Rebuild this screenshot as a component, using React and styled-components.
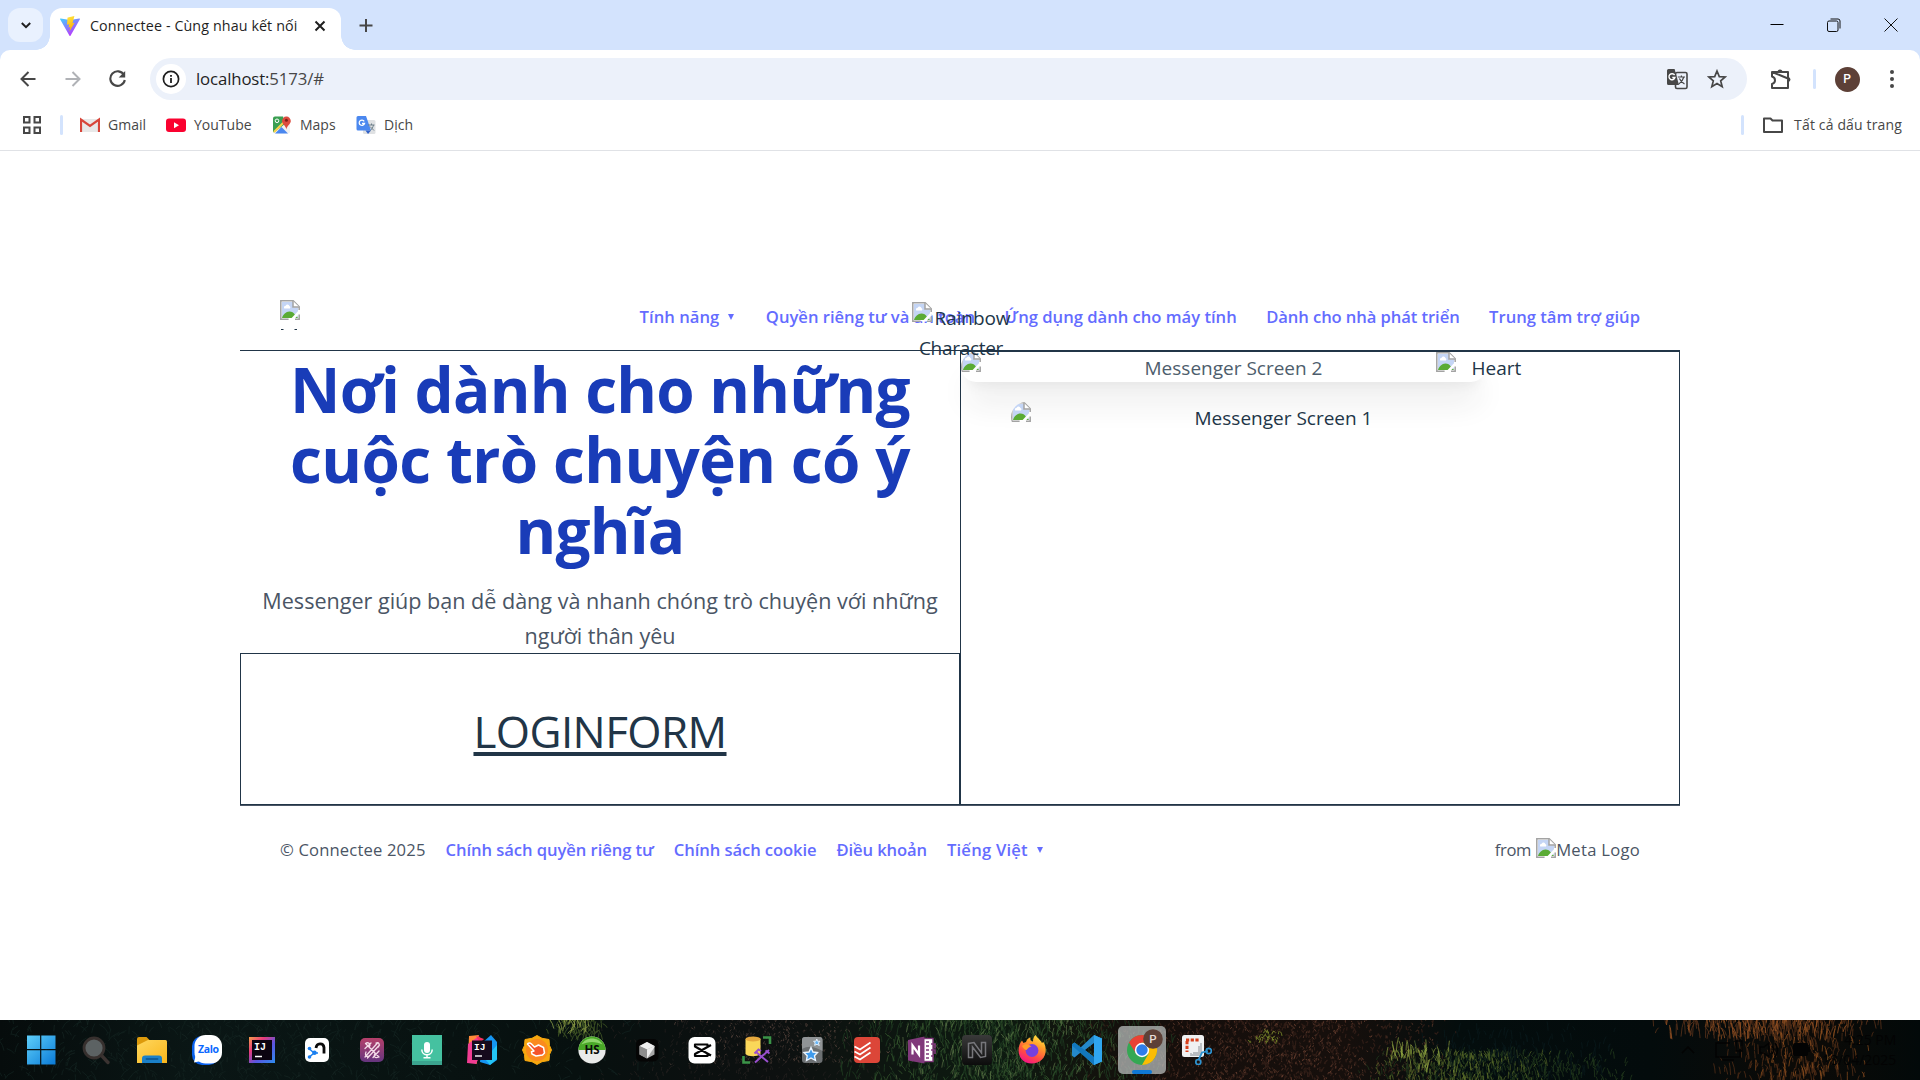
import React from "react";
import styled, { createGlobalStyle, css } from "styled-components";

const Global = createGlobalStyle`
  * { box-sizing: border-box; }
  html, body { margin: 0; padding: 0; background: #fff; }
  body { width: 1920px; height: 1080px; overflow: hidden; font-family: "Open Sans", "Noto Sans", sans-serif; }
  svg { display: block; flex: none; }
`;

const Screen = styled.div`
  width: 1920px;
  height: 1080px;
  display: flex;
  flex-direction: column;
  background: #fff;
`;

const Text = styled.span`
  font-size: ${(p) => p.$size}px;
  letter-spacing: ${(p) => p.$ls || 0}px;
  font-weight: ${(p) => p.$weight || 400};
  color: ${(p) => p.$color || "inherit"};
  line-height: ${(p) => p.$lh || 24}px;
  white-space: nowrap;
`;

/* ---------- browser chrome ---------- */

const TabStrip = styled.div`
  height: 50px;
  flex: none;
  display: flex;
  background: #d3e3fd;
  padding-left: 8px;
`;

const TabSearch = styled.div`
  width: 35px;
  height: 34px;
  margin-top: 8px;
  border-radius: 12px;
  background: #e9f1fe;
  display: flex;
  align-items: center;
  justify-content: center;
`;

const Tab = styled.div`
  position: relative;
  width: 291px;
  height: 42px;
  margin: 8px 0 0 7px;
  padding-left: 10px;
  border-radius: 12px 12px 0 0;
  background: #fff;
  display: flex;
  align-items: center;
  padding-bottom: 6px;
  &::before, &::after {
    content: "";
    position: absolute;
    bottom: 0;
    width: 14px;
    height: 14px;
  }
  &::before { left: -14px; background: radial-gradient(circle at 0 0, transparent 13.5px, #fff 14px); }
  &::after { right: -14px; background: radial-gradient(circle at 100% 0, transparent 13.5px, #fff 14px); }
`;

const TabTitle = styled.div`
  width: 224px;
  margin-left: 10px;
  display: flex;
  color: #1f1f1f;
`;

const NewTab = styled.div`
  margin: 17px 0 0 17px;
`;

const WindowButtons = styled.div`
  margin-left: auto;
  margin-right: 1px;
  display: flex;
  & > div {
    width: 57px;
    height: 50px;
    display: flex;
    align-items: center;
    justify-content: center;
  }
`;

const ToolbarWrap = styled.div`
  height: 52px;
  flex: none;
  background: #d3e3fd;
`;

const Toolbar = styled.div`
  height: 52px;
  background: #fff;
  border-radius: 10px 10px 0 0;
  display: flex;
  align-items: center;
  padding: 6px 12px 0 15px;
`;

const NavIcon = styled.div`
  width: ${(p) => p.$w || 45}px;
  display: flex;
  justify-content: ${(p) => p.$j || "center"};
`;

const Omnibox = styled.div`
  width: 1597px;
  height: 42px;
  border-radius: 21px;
  background: #ecf1fa;
  display: flex;
  align-items: center;
  padding: 0 20px 0 6px;
  color: #474747;
  b { font-weight: 400; color: #1f1f1f; }
`;

const InfoDot = styled.div`
  width: 30px;
  height: 30px;
  border-radius: 50%;
  background: #fff;
  display: flex;
  align-items: center;
  justify-content: center;
  margin-right: 10px;
`;

const OmniIcons = styled.div`
  margin-left: auto;
  display: flex;
  gap: 19px;
  align-items: center;
`;

const Divider = styled.div`
  width: 3px;
  height: 20px;
  border-radius: 2px;
  background: #d3e3fd;
`;

const Avatar = styled.div`
  width: 25px;
  height: 25px;
  border-radius: 50%;
  background: #5d4037;
  color: #fff;
  font: 500 12px/25px Roboto, sans-serif;
  text-align: center;
`;

const Bookmarks = styled.div`
  height: 49px;
  flex: none;
  display: flex;
  align-items: center;
  padding: 0 18px 3px 23px;
  border-bottom: 1px solid #e0e2e6;
  color: #474747;
`;

const Bookmark = styled.div`
  display: flex;
  align-items: center;
  gap: 8px;
  width: ${(p) => p.$w}px;
`;

const AllBookmarks = styled.div`
  display: flex;
  align-items: center;
  margin-left: auto;
`;

/* ---------- page ---------- */

const Page = styled.main`
  height: 869px;
  flex: none;
  padding: 139px 240px 0;
  color: #213547;
`;

const Header = styled.header`
  height: 61px;
  border-bottom: 1px solid #213547;
  padding: 10px 40px 0;
  display: flex;
  justify-content: space-between;
`;

const LogoClip = styled.div`
  width: 20px;
  height: 30px;
  overflow: hidden;
`;

const Nav = styled.nav`
  display: flex;
  gap: 29.5px;
  height: 34px;
  align-items: center;
`;

const Link = styled.a`
  display: flex;
  align-items: center;
  color: #646cff;
`;

const Caret = styled.i`
  width: 0;
  height: 0;
  margin-left: 9px;
  margin-right: ${(p) => p.$mr || 0}px;
  border-left: 3.5px solid transparent;
  border-right: 3.5px solid transparent;
  border-top: 6px solid #646cff;
`;

const Columns = styled.section`
  display: grid;
  grid-template-columns: 720px 720px;
  height: 454px;
`;

const Left = styled.div`
  display: flex;
  flex-direction: column;
  align-items: center;
`;

const Title = styled.h1`
  margin: 0;
  padding-top: 3px;
  height: 211px;
  flex: none;
  display: flex;
  flex-direction: column;
  align-items: center;
  color: #193cb8;
`;

const Lead = styled.p`
  margin: 20px 0 0;
  padding-top: 1px;
  height: 71px;
  flex: none;
  display: flex;
  flex-direction: column;
  align-items: center;
  color: #4a5565;
`;

const LoginBox = styled.div`
  width: 720px;
  height: 152px;
  border: 1px solid #213547;
  padding-top: 3px;
  display: flex;
  justify-content: center;
  align-items: center;
`;

const LoginText = styled.u`
  display: block;
  height: 60px;
  text-decoration: underline 4px #213547;
  text-underline-offset: 4px;
  text-decoration-skip-ink: none;
`;

const Right = styled.div`
  position: relative;
  border: 1px solid #213547;
`;

const Screen2 = styled.div`
  position: absolute;
  left: 0;
  top: 0;
  width: 525px;
  height: 30px;
  border-radius: 20px;
  opacity: 0.8;
  box-shadow: 0 25px 31px -6px rgba(0, 0, 0, 0.11), 0 10px 12.5px -7.5px rgba(0, 0, 0, 0.1);
`;

const Alt = styled.div`
  position: absolute;
  left: ${(p) => p.$x}px;
  top: ${(p) => p.$y}px;
  width: ${(p) => p.$w}px;
  height: 30px;
  display: flex;
  align-items: flex-start;
  overflow: ${(p) => (p.$r ? "hidden" : "visible")};
  border-radius: ${(p) => p.$r || 0}px;
  color: ${(p) => p.$color || "#213547"};
`;

const AltText = styled.span`
  flex: 1;
  display: flex;
  justify-content: center;
`;

const Rainbow = styled.div`
  position: absolute;
  left: -50px;
  top: -50px;
  width: 100px;
  z-index: 2;
  display: flex;
  flex-direction: column;
  align-items: center;
  & > div { display: flex; align-items: flex-start; gap: 3px; height: 30px; }
`;

const Footer = styled.footer`
  height: 89px;
  border-top: 1px solid #4a5565;
  padding: 0 40px;
  display: flex;
  align-items: center;
  gap: 20px;
  color: #4a5565;
`;

const From = styled.div`
  margin-left: auto;
  display: flex;
  align-items: center;
  height: 30px;
  & > svg { margin: -4px 0 0 5px; }
`;

/* ---------- taskbar ---------- */

const Taskbar = styled.div`
  position: relative;
  height: 60px;
  flex: none;
  background: #07100f;
  display: flex;
  padding-left: 14px;
  overflow: hidden;
`;

const Backdrop = styled.svg`
  position: absolute;
  left: 0;
  top: 0;
`;

const Slot = styled.div`
  position: relative;
  width: 55px;
  height: 60px;
  display: flex;
  align-items: center;
  justify-content: center;
  ${(p) => p.$active && css`
    &::before {
      content: "";
      position: absolute;
      left: 4px;
      top: 6px;
      width: 48px;
      height: 48px;
      border-radius: 5px;
      background: rgba(190, 196, 194, 0.72);
    }
    &::after {
      content: "";
      position: absolute;
      left: 18px;
      bottom: 6px;
      width: 20px;
      height: 4px;
      border-radius: 2px;
      background: #0f78d4;
    }
  `}
  & > svg { position: relative; }
`;

const Tray = styled.div`
  position: relative;
  margin-left: auto;
  width: 248px;
  display: flex;
  align-items: center;
  color: #030303;
`;

const Clock = styled.div`
  margin-left: auto;
  width: 86px;
  margin-right: 26px;
  display: flex;
  flex-direction: column;
  align-items: flex-end;
`;

const Broken = () => (
  <svg width="20" height="20" viewBox="0 0 20 20">
    <path d="M0.8 0.8H13.2L19.2 6.8V19.2H0.8Z" fill="#fff" />
    <path d="M2 2H13V7.5H18V18H2Z" fill="#c4d5f5" />
    <path d="M4.2 8.4a1.8 1.8 0 0 1 1.5-2.7 2 2 0 0 1 3.7.3 1.6 1.6 0 0 1 .6 2.4Z" fill="#fff" />
    <path d="M2 18C3 14.6 6 11.6 9.4 11.6c2.6 0 4.2 1.2 5.4 3L18 18Z" fill="#5aab35" />
    <path d="M10.2 19.4L19.6 9.6V13.6L14 19.4Z" fill="#fff" />
    <path d="M8.6 19.2H0.8V0.8H13.2L19.2 6.8V10" fill="none" stroke="#a3a3a3" strokeWidth="1.5" />
    <path d="M13 1V7H19.2" fill="#fff" stroke="#a3a3a3" strokeWidth="1.5" />
    <path d="M15 19.2H19.2V14.6" fill="none" stroke="#a3a3a3" strokeWidth="1.5" />
  </svg>
);

const S = ({ children, w = 30, h, vb }) => (
  <svg width={w} height={h || w} viewBox={vb || `0 0 ${w} ${h || w}`} fill="none">{children}</svg>
);

const TranslateMono = () => (
  <S w={22}>
    <rect x="9.5" y="4.5" width="11.5" height="16" rx="1.5" stroke="#474747" strokeWidth="1.6" />
    <path d="M2.5 1H8.6L13 17H2.5A1.5 1.5 0 0 1 1 15.500V2.5A1.5 1.5 0 0 1 2.500 1Z" fill="#474747" />
    <path d="M8.6 7.200A3 3 0 1 0 8.900 9.500H6.300" stroke="#fff" strokeWidth="1.4" />
    <path d="M11.800 9H19M15.400 7.500V9M17.800 9C17 12 15 14.500 12.800 16M13.400 10.500C14.500 13 16 14.500 18.500 16" stroke="#474747" strokeWidth="1.2" />
  </S>
);

const icons = [
  // Windows
  <S key="w"><defs><linearGradient id="win" x1="0" y1="0" x2="1" y2="1"><stop stopColor="#5fd0fb" /><stop offset="1" stopColor="#0a7ad6" /></linearGradient></defs>
    <path d="M-1 1H12.600V14.500H-1ZM13.800 1H28V14.500H13.800ZM-1 15.700H12.600V30H-1ZM13.800 15.700H28V30H13.800Z" transform="translate(.5 -.5)" fill="url(#win)" /></S>,
  // Search
  <S key="s"><path d="M19.500 20.500L26 27.500" stroke="#3b3331" strokeWidth="3.400" strokeLinecap="round" /><circle cx="12" cy="13" r="10" fill="#5c6263" stroke="#37302e" strokeWidth="2.800" /></S>,
  // Explorer
  <S key="e"><defs><linearGradient id="fo" x1="0" y1="0" x2="1" y2="1"><stop stopColor="#ffd75e" /><stop offset="1" stopColor="#f9b61b" /></linearGradient></defs>
    <path d="M0 4A2 2 0 0 1 2 2H9.500L13 5.500V12H0Z" fill="#dd9a0c" /><path d="M0 10.500L11 5H28.500A1.500 1.500 0 0 1 30 6.500V28H0Z" fill="url(#fo)" /><path d="M5 28V23.500A3 3 0 0 1 8 20.500H22A3 3 0 0 1 25 23.500V28Z" fill="#1b80c8" /><path d="M9.500 24H20.500" stroke="#0c5c9c" strokeWidth="1.800" strokeLinecap="round" /></S>,
  // Zalo
  <S key="z"><rect x="0" y="1" width="27" height="29" rx="10" fill="#0a61ee" /><rect x="2.500" y="0" width="27.500" height="28.500" rx="11" fill="#fff" /><path d="M3.500 21L2 27.500 9 26Z" fill="#fff" /><text x="16.500" y="18.300" fontSize="10.500" fontWeight="700" fontFamily="Open Sans" textAnchor="middle" fill="#0a68ff" textLength="21">Zalo</text></S>,
  // IntelliJ
  <S key="i"><defs><linearGradient id="ij" x1="0" y1="0" x2="1" y2="1"><stop stopColor="#f5a04a" /><stop offset=".3" stopColor="#e83a7a" /><stop offset=".6" stopColor="#5a55e0" /><stop offset="1" stopColor="#2d8df0" /></linearGradient></defs>
    <rect x="2" y="2" width="26" height="26" fill="url(#ij)" /><rect x="5" y="5" width="20" height="20" fill="#0b0410" /><text x="7" y="15" fontSize="10" fontWeight="700" fontFamily="Liberation Mono" fill="#fff">IJ</text><path d="M8 21.500H15" stroke="#fff" strokeWidth="1.500" /></S>,
  // n
  <S key="n"><rect x="3" y="3" width="24" height="24" rx="5" fill="#fff" /><path d="M14 13C14.500 7.500 21.500 7.500 22 12.500V18.500" stroke="#0a0a0a" strokeWidth="2.800" /><path d="M7.500 14L12 18 8 21.500M12 18H16" stroke="#1a7ff0" strokeWidth="1.500" /><circle cx="7.500" cy="13.500" r="1.800" fill="#1a7ff0" /><circle cx="7.500" cy="22" r="1.800" fill="#1a7ff0" /><circle cx="12.500" cy="17.800" r="2.200" fill="#1a7ff0" /></S>,
  // Purple knot
  <S key="k"><defs><linearGradient id="kn" x1="0" y1="0" x2="0" y2="1"><stop stopColor="#b5406a" /><stop offset="1" stopColor="#65357f" /></linearGradient></defs>
    <rect x="3" y="3" width="24" height="24" rx="5" fill="url(#kn)" /><path d="M8 22L20 8.500M10.500 23L22.500 10M9 9L22 22M8 13.500L14 8M16 22.500L22 16M9 17C7.500 20 9 22.500 12 21M19 8C22 7 23 9 21.500 12M8.500 8.500C11 6.500 14 9 12.500 11.500M21.500 22C18 24 16 21 18 18.500" stroke="#f4dce8" strokeWidth="1.300" strokeLinecap="round" /></S>,
  // Voice recorder
  <S key="v"><rect width="30" height="30" fill="#45c1a0" /><rect y="26" width="30" height="4" fill="#3ba38e" /><rect x="12" y="7" width="6" height="11" rx="3" fill="#fff" /><path d="M9.800 14.500C9.800 21.500 20.200 21.500 20.200 14.500M15 19.800V22.500M11.500 22.800H18.500" stroke="#fff" strokeWidth="1.500" /></S>,
  // IntelliJ community
  <S key="ic"><path d="M2 1L12 0 8 12 10 29 1 24Z" fill="#ff8a3a" /><path d="M1 9L12 1 16 14 9 29 0 28Z" fill="#f23d92" /><path d="M15 8L24 0 30 7V25L23 30 13 27Z" fill="#1595f2" /><path d="M18 24L30 10V24L23 30Z" fill="#24c4f5" /><path d="M9 1L17 4 13 8Z" fill="#fb2f5d" /><rect x="5" y="5.500" width="20" height="19.500" fill="#160a1c" /><text x="7" y="15" fontSize="9.500" fontWeight="700" fontFamily="Liberation Mono" fill="#fff">IJ</text><path d="M8 21H15" stroke="#fff" strokeWidth="1.400" /></S>,
  // Click badge
  <S key="cb"><path d="M15 .5L20 3.300 27 4.500 27.500 10.500 29.500 15 27.500 19.500 27 25.500 20 26.700 15 29.500 10 26.700 3 25.500 2.500 19.500 .5 15 2.500 10.500 3 4.500 10 3.300Z" fill="#f7a70f" strokeLinejoin="round" stroke="#f7a70f" /><circle cx="15" cy="15" r="11" fill="#fb8a1e" /><path d="M5.500 9C6 7.500 8 7.500 9.500 9L12.500 12 16.500 10 21.500 12.500 22.500 18 20.500 20 14 21 10 19 9.500 16.800 12 16Z" fill="#f4542a" stroke="#fff" strokeWidth="1.500" strokeLinejoin="round" /></S>,
  // HeidiSQL
  <S key="hs"><circle cx="15" cy="15" r="13.600" fill="#e9eae9" /><path d="M1.400 15A13.600 13.600 0 0 1 28.600 15Z" fill="#4aa928" /><path d="M4.500 9.500C9 1.500 21 1.500 25.500 9.500 19 6 11 6 4.500 9.500Z" fill="#8fd56c" /><text x="15" y="19" fontSize="11.500" fontWeight="700" fontFamily="Open Sans" textAnchor="middle" fill="#0a0a0a">HS</text></S>,
  // Cursor
  <S key="cu"><rect x="4" y="4" width="22.500" height="22.500" rx="5" fill="#050505" /><path d="M15 7L22.500 11V19.500L15 23.500 7.500 19.500V11Z" fill="#a8a8a8" /><path d="M7.500 11L15 7 22.500 11 15 14.500Z" fill="#f0f0f0" /><path d="M15 14.500L22.500 11V12L15 23.500Z" fill="#ededed" /><path d="M7.500 11L15 14.500V23.500L7.500 19.500Z" fill="#8d8d8d" /></S>,
  // CapCut
  <S key="cc"><rect x="1.500" y="2" width="27" height="26.500" rx="6" fill="#fff" /><path d="M20.500 11V9.500H8V11.500L24 20.500M20.500 19.500V21H8V19L24 10" stroke="#050505" strokeWidth="2.200" strokeLinejoin="round" /></S>,
  // Database tools
  <S key="db"><path d="M21 2.500H28V9M8 27.500H1.500V21" stroke="#3b9448" strokeWidth="2.600" /><path d="M3.500 4V19C6 22 15 22 18.500 19V4Z" fill="#fad759" /><ellipse cx="11" cy="4" rx="7.500" ry="2.600" fill="#e6a93e" /><path d="M14 17L26 27M12.500 18.500L16.500 14.500 19 16M27 15L13 27.500M23.500 15.500L27.500 18.500" stroke="#9a4fce" strokeWidth="2" /></S>,
  // Anki
  <S key="an"><rect x="5" y="2" width="20.500" height="26" rx="3" fill="#6c7072" /><path d="M5 14C13 9 20 13 25.500 16V5A3 3 0 0 0 22.500 2H8A3 3 0 0 0 5 5Z" fill="#909496" /><path d="M14 12.500L16 17 20.500 17.500 17.500 20.800 18.500 25.500 14 23 9.500 25.500 10.200 20.800 7 17.500 12 17Z" fill="#3f9bec" stroke="#eaf5ff" strokeWidth="1.400" /><path d="M19.800 4L20.600 6.300 23 6.200 21.400 8 22.300 10.500 20 9.300 17.600 10.300 18.200 8 16.600 6.200 19 6.200Z" fill="#68b5f5" stroke="#eaf5ff" strokeWidth=".9" /></S>,
  // Todoist
  <S key="td"><rect x="2" y="2" width="26" height="26" rx="4" fill="#dc4638" /><path d="M2.500 11.500L8 14.500 18.500 7.500M2.500 16.500L8 19.500 18.500 12.500M2.500 21.500L8 24.500 18.500 17.500" stroke="#fff" strokeWidth="1.800" /></S>,
  // OneNote
  <S key="on"><rect x="14" y="3.500" width="12" height="23" fill="#fff" stroke="#80397b" strokeWidth="1.400" /><path d="M24 9H28V13.500M24 15H28V19M24 21H27" stroke="#80397b" strokeWidth="1.600" /><path d="M19 7H22M19 11H22M19 15H22M19 19H22M19 23H22" stroke="#80397b" strokeWidth="1.300" /><path d="M1 5L17.500 1.500V28.500L1 25.500Z" fill="#80397b" /><path d="M5.500 19.500V10.500L12 19.500V10.500" stroke="#fff" strokeWidth="2.200" /></S>,
  // Dark N
  <S key="dn"><defs><linearGradient id="dn" x1="0" y1="0" x2="0" y2="1"><stop stopColor="#3a3a3a" /><stop offset="1" stopColor="#0c0c0c" /></linearGradient></defs><rect width="30" height="30" rx="4" fill="url(#dn)" /><path d="M6.500 22.500V8.500L12 7.500 19.500 18V7.500H23.500V21.500L18.500 22.500 10.500 12V22.500Z" fill="none" stroke="#77777b" strokeWidth="1.500" /></S>,
  // Firefox
  <S key="ff"><defs><linearGradient id="ff" x1=".8" y1="0" x2=".3" y2="1"><stop stopColor="#fff044" /><stop offset=".35" stopColor="#ff9a2a" /><stop offset=".7" stopColor="#ff4a45" /><stop offset="1" stopColor="#f5128a" /></linearGradient></defs>
    <path d="M18.500 0C20 3 24 5 25 8 26 7.500 26 6.500 26 6.500 30 12 29.500 20 25 24.500 19 30.500 9 29.500 4.500 24 0 18.500 1 10 5 5.500L6.500 8 9 7C10 4 12 2.500 13.500 2.500 13 5 14 6.500 16 6.500 16 3.500 17 1 18.500 0Z" fill="url(#ff)" /><circle cx="15" cy="15.500" r="6.400" fill="#7540dd" /><path d="M5 11C8 8 12 9 14.500 11.500 12 12 11 13 9.500 15 8 15 6 13 5 11Z" fill="#ff9b28" /></S>,
  // VS Code
  <S key="vs"><path d="M22 0L30 3.500V26.500L22 30 8.500 17.500 2.500 22.500 0 20.800V9.200L2.500 7.500 8.500 12.500ZM22 8L13 15 22 22Z" fillRule="evenodd" fill="#2489ca" /><path d="M22 0L30 3.500V26.500L22 30Z" fill="#2fa5ef" /><path d="M0 9.200L2.500 7.500 22 22V30L0 10.500Z" fill="#1277bd" /></S>,
  // Chrome with profile badge
  <S key="ch" w={42} vb="-6 -6 42 42"><circle cx="15" cy="15" r="15" fill="#34a853" /><path d="M15 7.500H28A15 15 0 0 1 15 30L21.500 18.700Z" fill="#fbbc04" /><path d="M2 7.500A15 15 0 0 1 28 7.500H15L9 18.500Z" fill="#e94235" /><circle cx="15" cy="15" r="7.200" fill="#fff" /><circle cx="15" cy="15" r="5.700" fill="#2f7de9" /><circle cx="26" cy="4" r="9.800" fill="#5d4037" /><text x="26" y="8" fontSize="11.500" fontWeight="500" fontFamily="Roboto" textAnchor="middle" fill="#e6dcd8">P</text></S>,
  // Snipping tool
  <S key="sn"><rect x="0" y="0" width="22" height="22" rx="2.500" fill="#f0f1f2" /><path d="M4 5H17M5 6V17" stroke="#d8401c" strokeWidth="3" strokeDasharray="3.200 1.500" /><path d="M9 18V20H17V11M19 8V18H11" stroke="#b8bcc0" strokeWidth="1.800" /><path d="M16.500 25L20 17.500 26 16" stroke="#2d93d0" strokeWidth="1.800" /><circle cx="26.800" cy="16" r="2.600" stroke="#2d93d0" strokeWidth="1.700" /><circle cx="16.300" cy="27" r="2.500" stroke="#2d93d0" strokeWidth="1.700" /></S>,
];

/* Grass, soil and reeds drawn as short strokes from a seeded generator. */
function strokes(seed, count, x0, x1, y0, y1, len, slant) {
  let a = seed >>> 0;
  const r = () => {
    a = (a + 0x6d2b79f5) >>> 0;
    let t = Math.imul(a ^ (a >>> 15), 1 | a);
    t = (t + Math.imul(t ^ (t >>> 7), 61 | t)) ^ t;
    return ((t ^ (t >>> 14)) >>> 0) / 4294967296;
  };
  let d = "";
  for (let i = 0; i < count; i++) {
    const x = x0 + ((r() + r()) / 2) * (x1 - x0);
    const y = y0 + r() * (y1 - y0);
    const l = len * (0.4 + r());
    const dx = (r() - 0.5) * slant;
    d += `M${x.toFixed(1)} ${y.toFixed(1)}q${(dx * 0.2).toFixed(1)} ${(-l * 0.6).toFixed(1)} ${dx.toFixed(1)} ${(-l).toFixed(1)}`;
  }
  return d;
}

const grass = [
  [1, 500, -200, 700, 0, 66, 7, 18, "#10201d", 1],
  [2, 160, -50, 600, 0, 62, 5, 14, "#1a2b27", 0.7],
  [3, 70, 545, 610, 0, 22, 8, 14, "#3f5524", 1],
  [4, 34, 552, 598, 0, 14, 7, 10, "#8c9c45", 0.9],
  [5, 420, 580, 900, 0, 62, 3, 6, "#221e1d", 1],
  [6, 260, 660, 900, 0, 45, 2, 4, "#5a463e", 0.9],
  [7, 700, 820, 1180, 0, 66, 8, 9, "#1d3820", 1],
  [8, 360, 850, 1150, 0, 66, 7, 9, "#35552d", 0.9],
  [9, 130, 860, 1140, 0, 60, 7, 8, "#688050", 0.7],
  [10, 1000, 1080, 1460, 0, 64, 3, 5, "#352019", 1.2],
  [11, 480, 1110, 1440, 0, 62, 2, 4, "#6b4030", 0.9],
  [12, 40, 1248, 1285, 12, 24, 3, 6, "#7d8c2c", 1],
  [13, 420, 1350, 1640, 34, 68, 6, 7, "#20361b", 1],
  [14, 260, 1370, 1560, 34, 66, 6, 6, "#5c6e2a", 0.8],
  [15, 50, 1375, 1460, 30, 54, 11, 8, "#93a641", 0.8],
  [16, 160, 1400, 1640, 10, 60, 8, 6, "#08181a", 1],
  [17, 150, 1620, 1890, -2, 20, 12, 10, "#56301a", 1],
  [18, 260, 1710, 1880, 0, 66, 9, 7, "#4c2a15", 1],
  [19, 90, 1650, 1860, -2, 22, 12, 8, "#9a5424", 0.9],
  [20, 80, 1740, 1870, 10, 62, 8, 6, "#96531f", 0.8],
];

const Scenery = () => (
  <Backdrop width="1920" height="60">
    <defs>
      <linearGradient id="ground" x1="0" x2="1">
        <stop offset="0" stopColor="#060c0c" /><stop offset=".1" stopColor="#0a1615" /><stop offset=".3" stopColor="#07100f" />
        <stop offset=".4" stopColor="#0d1010" /><stop offset=".52" stopColor="#0d1a10" /><stop offset=".6" stopColor="#150e0b" />
        <stop offset=".7" stopColor="#160f0c" /><stop offset=".76" stopColor="#040d0d" /><stop offset=".86" stopColor="#030b0c" />
        <stop offset=".94" stopColor="#0c0a07" /><stop offset="1" stopColor="#020909" />
      </linearGradient>
    </defs>
    <rect width="1920" height="60" fill="url(#ground)" />
    {grass.map(([seed, n, x0, x1, y0, y1, l, sl, c, w]) => (
      <path key={seed} d={strokes(seed * 7919, n, x0, x1, y0, y1, l, sl)} stroke={c} strokeWidth={w} fill="none" opacity=".85" />
    ))}
  </Backdrop>
);

export default function App() {
  return (
    <Screen>
      <Global />
      <TabStrip>
        <TabSearch><S w={12}><path d="M1.800 4L6 8.200 10.200 4" stroke="#1f1f1f" strokeWidth="2" /></S></TabSearch>
        <Tab>
          <S w={20}>
            <defs>
              <linearGradient id="va" x1="0" y1="0" x2=".6" y2="1"><stop stopColor="#41d1ff" /><stop offset="1" stopColor="#bd34fe" /></linearGradient>
              <linearGradient id="vb" x1=".4" y1="0" x2=".6" y2="1"><stop stopColor="#ffea83" /><stop offset=".1" stopColor="#ffdd35" /><stop offset="1" stopColor="#ffa800" /></linearGradient>
            </defs>
            <path d="M19.900 3.200L10.500 19.700A.6.600 0 0 1 9.500 19.700L.1 3.200A.6.600 0 0 1 .7 2.400L10 4 19.300 2.400A.6.600 0 0 1 19.900 3.200Z" fill="url(#va)" />
            <path d="M14.400 0L7.500 1.400 7 8.800 9.200 8.300 8.500 11.600 10.300 11.100 9.400 15.500 14.600 6.800 12.500 7.200Z" fill="url(#vb)" />
          </S>
          <TabTitle><Text $size={14.3} $ls={0.1}>Connectee - Cùng nhau kết nối</Text></TabTitle>
          <S w={12} ><path d="M1.500 1.500L10.500 10.500M10.500 1.500L1.500 10.500" stroke="#1f1f1f" strokeWidth="2" /></S>
        </Tab>
        <NewTab><S w={16}><path d="M8 2V15M1.500 8.500H14.500" stroke="#474747" strokeWidth="2" /></S></NewTab>
        <WindowButtons>
          <div><S w={14}><path d="M.5 6.500H13.500" stroke="#000" /></S></div>
          <div><S w={14}><rect x=".5" y="3" width="10.500" height="10.500" rx="1.500" stroke="#111" /><path d="M3.500 1H11A2 2 0 0 1 13 3V10.500" stroke="#111" /></S></div>
          <div><S w={14}><path d="M.5.5L13.500 13.500M13.500.5L.5 13.500" stroke="#111" /></S></div>
        </WindowButtons>
      </TabStrip>
      <ToolbarWrap>
        <Toolbar>
          <NavIcon $w={25}><S w={16}><path d="M15.500 8H2M8.500 1L1.500 8 8.500 15" stroke="#474747" strokeWidth="2" /></S></NavIcon>
          <NavIcon $w={65}><S w={16}><path d="M.5 8H14M7.500 1L14.500 8 7.500 15" stroke="#b0b2b6" strokeWidth="2" /></S></NavIcon>
          <NavIcon $w={45} $j="flex-start"><S w={26} h={18} vb="-2.5 0 26 18"><path d="M16.500 5A7.300 7.300 0 1 0 17.300 10" stroke="#474747" strokeWidth="2.100" /><path d="M17.700 1V7.500H11.200Z" fill="#474747" /></S></NavIcon>
          <Omnibox>
            <InfoDot><S w={18}><circle cx="9" cy="9" r="7.600" stroke="#1f1f1f" strokeWidth="1.700" /><path d="M9 8V13M9 5V6.800" stroke="#1f1f1f" strokeWidth="1.800" /></S></InfoDot>
            <Text $size={16.8} $ls={-0.14} $lh={26}><b>localhost:</b>5173/#</Text>
            <OmniIcons>
              <TranslateMono />
              <S w={20}><path d="M10 2L12.300 7.600 18.200 8 13.700 11.900 15.200 17.700 10 14.500 4.800 17.700 6.300 11.900 1.800 8 7.700 7.600Z" stroke="#474747" strokeWidth="1.700" /></S>
            </OmniIcons>
          </Omnibox>
          <NavIcon $w={66}><S w={22}><path d="M3 4H19V10.500M19 10.500V20H3V16C7 15 7 9.500 3 8.500V4Z" stroke="#474747" strokeWidth="2" strokeLinejoin="round" /><path d="M8.500 4a2.500 2.500 0 0 1 5 0ZM19 9a2.500 2.500 0 0 1 0 5Z" fill="#474747" /></S></NavIcon>
          <Divider />
          <NavIcon $w={62}><Avatar>P</Avatar></NavIcon>
          <NavIcon $w={28}><S w={6} h={20}><circle cx="3" cy="3" r="2" fill="#474747" /><circle cx="3" cy="10" r="2" fill="#474747" /><circle cx="3" cy="17" r="2" fill="#474747" /></S></NavIcon>
        </Toolbar>
      </ToolbarWrap>
      <Bookmarks>
        <Bookmark $w={37}><S w={18}><path d="M1 1H6.500V6.500H1ZM11.500 1H17V6.500H11.500ZM1 11.500H6.500V17H1ZM11.500 11.500H17V17H11.500Z" stroke="#474747" strokeWidth="2" /></S></Bookmark>
        <Bookmark $w={20}><Divider /></Bookmark>
        <Bookmark $w={86}>
          <S w={20}><path d="M2 4H18V17H2Z" fill="#e8e8e8" /><path d="M1 17V4.500L10 11 19 4.500V17" stroke="#d8453a" strokeWidth="2.200" /></S>
          <Text $size={14}>Gmail</Text>
        </Bookmark>
        <Bookmark $w={106}>
          <S w={20}><rect y="3.500" width="20" height="13.500" rx="3" fill="#fa0230" /><path d="M8 7.300V13.200L13 10.200Z" fill="#fff" /></S>
          <Text $size={14}>YouTube</Text>
        </Bookmark>
        <Bookmark $w={84}>
          <S w={20}><rect x="1" y="1.500" width="17" height="17" rx="2" fill="#f1f1f1" /><path d="M3 1.500H11L13 9 2 17.500A2 2 0 0 1 1 16V3.500A2 2 0 0 1 3 1.500Z" fill="#3a9f52" /><path d="M3 18.500L9.500 12 16 18.500Z" fill="#4a87ef" /><path d="M2 17L12 7 14 10" stroke="#fcd34a" strokeWidth="2" /><path d="M10 6A4.300 4.300 0 0 1 18.800 6C18.800 9 15 10.500 14.400 14.500 13.800 10.500 10 9 10 6Z" fill="#dd4b3e" /><circle cx="14.400" cy="5.300" r="1.500" fill="#7d1f18" /><circle cx="5" cy="5.800" r="1.800" stroke="#fff" strokeWidth="1" /></S>
          <Text $size={14}>Maps</Text>
        </Bookmark>
        <Bookmark $w={80}>
          <S w={20}><rect x="7" y="5" width="12.500" height="14" rx="1.500" fill="#dfe1e3" /><path d="M2 1H10L15 15.500H2A1.500 1.500 0 0 1 .5 14V2.500A1.500 1.500 0 0 1 2 1Z" fill="#4b88ef" /><path d="M9.500 15.500H15L12 19Z" fill="#3060c8" /><path d="M8.200 6.300A2.700 2.700 0 1 0 8.500 8.500H6" stroke="#fff" strokeWidth="1.300" /><path d="M12 10H18.500M15.500 8.500V10M17.500 10C17 12.500 15.500 14.500 14.500 15.500M14 11.500L18 15.500" stroke="#6d7f8a" /></S>
          <Text $size={14}>Dịch</Text>
        </Bookmark>
        <AllBookmarks>
          <Bookmark $w={22}><Divider /></Bookmark>
          <Bookmark $w={31}><S w={20}><path d="M1 3.500H7.500L9.500 5.500H19V17H1Z" stroke="#474747" strokeWidth="2" strokeLinejoin="round" /></S></Bookmark>
          <Text $size={14} $ls={0.15}>Tất cả dấu trang</Text>
        </AllBookmarks>
      </Bookmarks>

      <Page>
        <Header>
          <LogoClip><Broken /><S w={20} h={10}><path d="M1 9.500H3.500M14.500 9.500H17" stroke="#213547" /></S></LogoClip>
          <Nav>
            <Link><Text $size={16.6} $weight={600} $ls={0.06}>Tính năng</Text><Caret $mr={2} /></Link>
            <Link><Text $size={16.6} $weight={600}>Quyền riêng tư và an toàn</Text></Link>
            <Link><Text $size={16.6} $weight={600}>Ứng dụng dành cho máy tính</Text></Link>
            <Link><Text $size={16.6} $weight={600} $ls={-0.08}>Dành cho nhà phát triển</Text></Link>
            <Link><Text $size={16.6} $weight={600}>Trung tâm trợ giúp</Text></Link>
          </Nav>
        </Header>
        <Columns>
          <Left>
            <Title>
              <Text $size={62} $lh={70.4} $weight={700} $ls={-0.75}>Nơi dành cho những</Text>
              <Text $size={62} $lh={70.4} $weight={700} $ls={-0.62}>cuộc trò chuyện có ý</Text>
              <Text $size={62} $lh={70.4} $weight={700} $ls={-0.75}>nghĩa</Text>
            </Title>
            <Lead>
              <Text $size={21.6} $lh={35} $ls={-0.02}>Messenger giúp bạn dễ dàng và nhanh chóng trò chuyện với những</Text>
              <Text $size={21.6} $lh={35} $ls={-0.04}>người thân yêu</Text>
            </Lead>
            <LoginBox><LoginText><Text $size={44} $lh={60} $ls={-0.58}>LOGINFORM</Text></LoginText></LoginBox>
          </Left>
          <Right>
            <Rainbow>
              <div><Broken /><Text $size={19} $lh={33} $ls={-0.1}>Rainbow</Text></div>
              <div><Text $size={19} $lh={33} $ls={-0.3}>Character</Text></div>
            </Rainbow>
            <Screen2 />
            <Alt $x={0} $y={0} $w={525} $r={20} $color="#4d5d6c"><Broken /><AltText><Text $size={19} $lh={33}>Messenger Screen 2</Text></AltText></Alt>
            <Alt $x={475} $y={0} $w={101}><Broken /><AltText><Text $size={19} $lh={33}>Heart</Text></AltText></Alt>
            <Alt $x={50} $y={50} $w={525} $r={20}><Broken /><AltText><Text $size={19} $lh={33}>Messenger Screen 1</Text></AltText></Alt>
          </Right>
        </Columns>
        <Footer>
          <Text $size={16.6} $ls={0.16}>© Connectee 2025</Text>
          <Link><Text $size={16.6} $weight={600} $ls={-0.06}>Chính sách quyền riêng tư</Text></Link>
          <Link><Text $size={16.6} $weight={600} $ls={-0.08}>Chính sách cookie</Text></Link>
          <Link><Text $size={16.6} $weight={600} $ls={-0.12}>Điều khoản</Text></Link>
          <Link><Text $size={16.6} $weight={600} $ls={0.23}>Tiếng Việt</Text><Caret /></Link>
          <From><Text $size={16.6} $ls={-0.3}>from</Text><Broken /><Text $size={16.6} $ls={0.28}>Meta Logo</Text></From>
        </Footer>
      </Page>

      <Taskbar>
        <Scenery />
        {icons.map((icon, i) => <Slot key={i} $active={i === 20}>{icon}</Slot>)}
        <Tray>
          <S w={120} h={30}><path d="M10 18L16 12 22 18M58 8H44V22H68V14M64 6H70V16H64ZM50 25H62M88 12H92L97 8V22L92 18H88ZM100 11Q103 15 100 19M103 8Q108 15 103 22" stroke="#030303" strokeWidth="1.500" /></S>
          <S w={30}><rect x="1" y="8" width="15" height="13" rx="2" fill="#030303" /><path d="M17 12V17" stroke="#030303" strokeWidth="2" /></S>
          <Clock><Text $size={14} $lh={20}>4:25 PM</Text><Text $size={14} $lh={20}>18/04/2025</Text></Clock>
        </Tray>
      </Taskbar>
    </Screen>
  );
}
